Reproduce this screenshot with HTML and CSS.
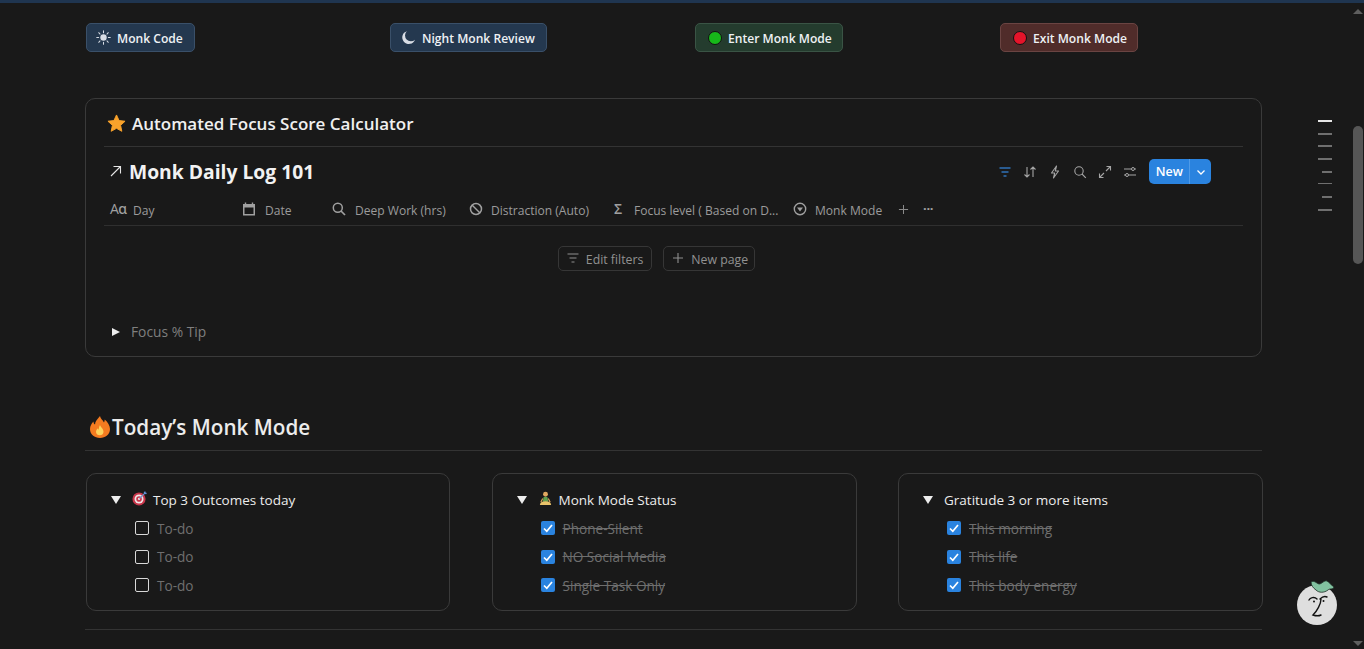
FILE: index.html
```html
<!DOCTYPE html>
<html lang="en">
<head>
<meta charset="utf-8">
<title>Monk Mode</title>
<link rel="stylesheet" href="styles.css">
</head>
<body>
<div class="topbar"></div>
<main class="page">
  <nav class="buttons">
    <div class="cell"><a class="btn btn-blue">
      <svg class="btn-ico" viewBox="0 0 16 16"><circle cx="8" cy="8" r="3.4" fill="#d8dde5"/><g stroke="#d8dde5" stroke-width="1.1" stroke-linecap="round"><path d="M8 .8v2M8 13.2v2M.8 8h2M13.2 8h2M2.9 2.9l1.4 1.4M11.7 11.7l1.4 1.4M2.9 13.1l1.4-1.4M11.7 4.3l1.4-1.4"/></g></svg>
      <span>Monk Code</span></a></div>
    <div class="cell"><a class="btn btn-blue btn-moon">
      <svg class="btn-ico" viewBox="0 0 16 16"><path d="M6.3 1.2a7 7 0 1 0 8.6 9.2 6 6 0 0 1-8.6-9.2z" fill="#d8dde5"/></svg>
      <span>Night Monk Review</span></a></div>
    <div class="cell"><a class="btn btn-green"><i class="dot dot-green"></i><span>Enter Monk Mode</span></a></div>
    <div class="cell"><a class="btn btn-red"><i class="dot dot-red"></i><span>Exit Monk Mode</span></a></div>
  </nav>

  <section class="card">
    <h3 class="card-title">
      <svg class="star" viewBox="0 0 20 20"><path d="M10 1l2.7 5.9 6.3.7-4.7 4.3 1.3 6.3L10 15.1 4.4 18.2l1.3-6.3L1 7.6l6.3-.7z" fill="#f9a22b" stroke="#f9a22b" stroke-linejoin="round"/></svg>
      <span>Automated Focus Score Calculator</span>
    </h3>
    <div class="db-head">
      <div class="db-title">
        <svg class="arrow" viewBox="0 0 12 12"><path d="M1 11L10.5 1.5M3.5 1.5h7v7" fill="none" stroke="#e6e6e6" stroke-width="1.1"/></svg>
        <span>Monk Daily Log 101</span>
      </div>
      <div class="tools">
        <svg class="tool" viewBox="0 0 14 14"><path d="M1.5 3h11M3.5 7h7M5.5 11h3" stroke="#2f72b8" stroke-width="1.7" fill="none"/></svg>
        <svg class="tool" viewBox="0 0 14 14"><path d="M4 2v10M1.5 9.5L4 12l2.5-2.5M10 12V2M7.5 4.5L10 2l2.5 2.5" stroke="#a5a5a5" stroke-width="1.1" fill="none"/></svg>
        <svg class="tool" viewBox="0 0 14 14"><path d="M8.5 1L3.5 8h3.2L5.5 13l5-7H7.3z" stroke="#a5a5a5" stroke-width="1.1" fill="none" stroke-linejoin="round"/></svg>
        <svg class="tool" viewBox="0 0 14 14"><circle cx="6" cy="6" r="4.2" stroke="#a5a5a5" stroke-width="1.1" fill="none"/><path d="M9 9l3.8 3.8" stroke="#a5a5a5" stroke-width="1.1"/></svg>
        <svg class="tool" viewBox="0 0 14 14"><path d="M8 6l4.5-4.5M8.5 1.5h4v4M6 8l-4.5 4.5M1.5 8.5v4h4" stroke="#a5a5a5" stroke-width="1.1" fill="none"/></svg>
        <svg class="tool" viewBox="0 0 14 14"><path d="M1 4h7.5M11.5 4H13M1 10h1.500M5.500 10H13" stroke="#a5a5a5" stroke-width="1.1"/><circle cx="10" cy="4" r="1.5" stroke="#a5a5a5" fill="none"/><circle cx="4" cy="10" r="1.5" stroke="#a5a5a5" fill="none"/></svg>
        <div class="new-btn"><span class="new-label">New</span><span class="new-caret"><svg viewBox="0 0 10 10"><path d="M1.500 3.500L5 7l3.500-3.500" stroke="#fff" stroke-width="1.300" fill="none"/></svg></span></div>
      </div>
    </div>
    <div class="props">
      <div class="prop p-day"><span class="aa">Aɑ</span><span>Day</span></div>
      <div class="prop p-date"><svg class="pi" viewBox="0 0 14 14"><path d="M3.500 0.500v2M10.500 0.500v2" stroke="#a0a0a0" stroke-width="1.400"/><path fill-rule="evenodd" d="M1 2h12v11.500H1zM2.500 5.500v6.500h9V5.500z" fill="#a0a0a0"/></svg><span>Date</span></div>
      <div class="prop p-deep"><svg class="pi" viewBox="0 0 14 14"><circle cx="5.800" cy="5.800" r="4.500" stroke="#a0a0a0" stroke-width="1.500" fill="none"/><path d="M9 9l4 4" stroke="#a0a0a0" stroke-width="1.700"/></svg><span>Deep Work (hrs)</span></div>
      <div class="prop p-dist"><svg class="pi" viewBox="0 0 14 14"><circle cx="7" cy="7" r="5.500" stroke="#a0a0a0" stroke-width="1.500" fill="none"/><path d="M3 3l8 8" stroke="#a0a0a0" stroke-width="1.500"/></svg><span>Distraction (Auto)</span></div>
      <div class="prop p-focus"><span class="sigma">Σ</span><span>Focus level ( Based on D...</span></div>
      <div class="prop p-mode"><svg class="pi" viewBox="0 0 14 14"><circle cx="7" cy="7" r="5.700" stroke="#a0a0a0" stroke-width="1.400" fill="none"/><path d="M4 5.500h6L7 9.500z" fill="#a0a0a0"/></svg><span>Monk Mode</span></div>
      <svg class="plus" viewBox="0 0 12 12"><path d="M6 1v10M1 6h10" stroke="#8a8a8a" stroke-width="1.100"/></svg>
      <span class="dots">···</span>
    </div>
    <div class="empty">
      <a class="ghost"><svg class="gi" viewBox="0 0 14 14"><path d="M1.500 3h11M3.500 7h7M5.500 11h3" stroke="#8f8f8f" stroke-width="1.200" fill="none"/></svg><span>Edit filters</span></a>
      <a class="ghost ghost-new"><svg class="gi" viewBox="0 0 14 14"><path d="M7 2v10M2 7h10" stroke="#8f8f8f" stroke-width="1.100"/></svg><span>New page</span></a>
    </div>
    <div class="tip"><i class="tri-right"></i><span>Focus % Tip</span></div>
  </section>

  <h2 class="section-title">
    <svg class="flame" viewBox="1 0 22 24"><path d="M12 1c1 3.500 3 4 4 6.500.5-1 .8-1.800.7-3 3 2.500 5.300 6 5.300 9.500 0 5.500-4.500 9-10 9S2 19.500 2 14c0-3 1.500-5.500 3.500-7.500 0 1.500.5 2.500 1.500 3C7 6.500 9.500 4 12 1z" fill="#f47b20"/><path d="M12 10c.5 2 3.500 3.500 3.500 7a3.800 3.800 0 0 1-7.500 0c0-1.800 1-2.800 2-3.700.300.8.600 1.200 1 1.400-.2-1.500 0-3.200 1-4.700z" fill="#fdd35c"/></svg>
    <span>Today’s Monk Mode</span>
  </h2>

  <div class="columns">
    <section class="col">
      <div class="col-head"><i class="tri-down"></i>
        <svg class="emoji" viewBox="0 0 16 16"><circle cx="7.500" cy="8.500" r="7" fill="#c8354a"/><circle cx="7.500" cy="8.500" r="4.800" fill="#efe6e6"/><circle cx="7.500" cy="8.500" r="3" fill="#c8354a"/><circle cx="7.500" cy="8.500" r="1.200" fill="#efe6e6"/><path d="M8 8L14 2" stroke="#6f92c9" stroke-width="1.200"/><path d="M12.500 1l.5 2 2 .5 1-1.500-1.500-.3-.3-1.500z" fill="#5f8fd6"/></svg>
        <span>Top 3 Outcomes today</span></div>
      <ul class="todos">
        <li class="todo"><i class="box"></i><span>To-do</span></li>
        <li class="todo"><i class="box"></i><span>To-do</span></li>
        <li class="todo"><i class="box"></i><span>To-do</span></li>
      </ul>
    </section>
    <section class="col">
      <div class="col-head"><i class="tri-down"></i>
        <svg class="emoji" viewBox="0 0 16 16"><circle cx="8" cy="3.500" r="2.600" fill="#e0a860"/><path d="M6 6.500h4l1 5H5z" fill="#5fa04e"/><path d="M2 15c0-2.500 2-4 6-4s6 1.500 6 4z" fill="#e9c36a"/><path d="M5 8l-2 4M11 8l2 4" stroke="#e0a860" stroke-width="1.200"/></svg>
        <span>Monk Mode Status</span></div>
      <ul class="todos">
        <li class="todo done"><i class="box checked"><svg viewBox="0 0 14 14"><path d="M3 7.500l2.800 2.800L11 4" stroke="#fff" stroke-width="1.700" fill="none"/></svg></i><span>Phone-Silent</span></li>
        <li class="todo done"><i class="box checked"><svg viewBox="0 0 14 14"><path d="M3 7.500l2.800 2.800L11 4" stroke="#fff" stroke-width="1.700" fill="none"/></svg></i><span>NO Social Media</span></li>
        <li class="todo done"><i class="box checked"><svg viewBox="0 0 14 14"><path d="M3 7.500l2.800 2.800L11 4" stroke="#fff" stroke-width="1.700" fill="none"/></svg></i><span>Single Task Only</span></li>
      </ul>
    </section>
    <section class="col">
      <div class="col-head"><i class="tri-down"></i><span>Gratitude 3 or more items</span></div>
      <ul class="todos">
        <li class="todo done"><i class="box checked"><svg viewBox="0 0 14 14"><path d="M3 7.500l2.800 2.800L11 4" stroke="#fff" stroke-width="1.700" fill="none"/></svg></i><span>This morning</span></li>
        <li class="todo done"><i class="box checked"><svg viewBox="0 0 14 14"><path d="M3 7.500l2.800 2.800L11 4" stroke="#fff" stroke-width="1.700" fill="none"/></svg></i><span>This life</span></li>
        <li class="todo done"><i class="box checked"><svg viewBox="0 0 14 14"><path d="M3 7.500l2.800 2.800L11 4" stroke="#fff" stroke-width="1.700" fill="none"/></svg></i><span>This body energy</span></li>
      </ul>
    </section>
  </div>
  <hr class="rule">
</main>

<div class="toc">
  <i class="w14 on"></i><i class="w14"></i><i class="w14"></i><i class="w14"></i><i class="w10"></i><i class="w14 thin"></i><i class="w10"></i><i class="w14"></i>
</div>

<div class="scrollbar">
  <i class="sb-up"></i>
  <div class="sb-track"><div class="sb-thumb"></div></div>
  <i class="sb-down"></i>
</div>

<svg class="mascot" viewBox="0 0 44 48">
  <circle cx="21" cy="27" r="20" fill="#dedede"/>
  <path d="M15 4c3-2 5 1 8 2 3 0 5-4 8-3 2 1 3 3 7 6-1 3-4 1-6 3-4 3-9 3-12 0-3-2-5-5-5-8z" fill="#82c2a0" stroke="#1a2a22" stroke-width=".8"/>
  <path d="M13 22c1-2 5-4 8-1M24 21c2-2 5-3 7-2M25 21c0 5-4 12-8 16 3 1 6 1 8 0" fill="none" stroke="#111" stroke-width="1.400" stroke-linecap="round"/>
  <circle cx="18" cy="23.500" r="1" fill="#111"/><circle cx="27.500" cy="23" r="1" fill="#111"/>
</svg>
</body>
</html>
```
FILE: styles.css
```css
* { box-sizing: border-box; }
html, body { margin: 0; height: 649px; overflow: hidden; }
body {
  background: #191919;
  color: #e6e6e6;
  font-family: "Open Sans", "Noto Sans", sans-serif;
  font-size: 13px;
}
a { text-decoration: none; color: inherit; }
i { display: block; }

.topbar { height: 3px; background: #1f3550; }
.page { padding: 0 102px 0 85px; }

.buttons {
  display: grid;
  grid-template-columns: 304px 305px 305px 1fr;
  margin-top: 20px;
  padding-left: 1px;
}
.cell { display: flex; }
.btn {
  display: flex;
  align-items: center;
  height: 29px;
  padding: 0 11px 0 9px;
  gap: 6px;
  border-radius: 5px;
  border: 1px solid;
  font-size: 12.1px;
  font-weight: 600;
  color: #eef1f4;
  white-space: nowrap;
}
.btn span { padding-top: 2px; }
.btn-blue { background: #24384f; border-color: #3a5069; }
.btn-moon { padding-left: 10px; }
.btn-green { background: #243c2e; border-color: #3a5445; padding: 0 10px 0 12px; }
.btn-red { background: #502c2a; border-color: #6a4442; padding: 0 10px 0 12px; }
.btn-ico { width: 15px; height: 15px; flex: none; }
.dot { width: 14px; height: 14px; border-radius: 50%; border: 1px solid #111; }
.dot-green { background: #17b81a; }
.dot-red { background: #e5142a; }

.card {
  margin-top: 46px;
  height: 259px;
  border: 1px solid #3a3a3a;
  border-radius: 10px;
  padding: 0 18px;
  display: flex;
  flex-direction: column;
}
.card-title {
  margin: 0;
  height: 48px;
  padding: 2px 3px 0;
  display: flex;
  align-items: center;
  gap: 6px;
  border-bottom: 1px solid #333;
  font-size: 17px;
  font-weight: 600;
  color: #f0f0f0;
}
.star { width: 19px; height: 19px; flex: none; margin-bottom: 1px; }

.db-head {
  height: 50px;
  display: flex;
  align-items: center;
  justify-content: space-between;
  padding: 0 32px 2px 6px;
}
.db-title {
  display: flex;
  align-items: center;
  gap: 7px;
  font-size: 19.3px;
  font-weight: 700;
  color: #f2f2f2;
}
.arrow { width: 12px; height: 12px; flex: none; }
.tools { display: flex; align-items: center; gap: 11px; }
.tool { width: 14px; height: 14px; flex: none; margin-top: 2px; }
.new-btn {
  display: flex;
  align-items: stretch;
  height: 25px;
  margin-left: 1px;
  background: #2a83df;
  border-radius: 5px;
  color: #fff;
  font-weight: 600;
  font-size: 12.5px;
}
.new-label { display: flex; align-items: center; padding: 0 6px 0 7px; border-right: 1px solid #4f9be8; }
.new-caret { display: flex; align-items: center; justify-content: center; width: 21px; }
.new-caret svg { width: 10px; height: 10px; margin-top: 2px; }

.props {
  height: 29px;
  padding-bottom: 2px;
  display: flex;
  align-items: center;
  border-bottom: 1px solid #2f2f2f;
  color: #9b9b9b;
  font-size: 12.05px;
  position: relative;
}
.prop { display: flex; align-items: center; flex: none; white-space: nowrap; gap: 8px; }
.p-day { width: 138px; padding-left: 6px; gap: 7px; }
.p-date { width: 90px; gap: 9px; }
.p-deep { width: 137px; gap: 9px; }
.p-dist { width: 145px; }
.p-focus { width: 179px; gap: 9px; }
.p-mode { width: 105px; }
.pi { width: 14px; height: 14px; flex: none; margin-top: -3px; }
.aa { font-size: 14px; font-weight: 500; width: 16px; letter-spacing: -.5px; margin-top: -3px; color: #a0a0a0; white-space: nowrap; }
.sigma { font-size: 14px; margin-top: -3px; font-weight: 600; width: 11px; color: #a0a0a0; }
.plus { width: 11px; height: 11px; flex: none; margin-top: -2px; }
.dots { margin-left: 14px; font-weight: 700; font-size: 13px; letter-spacing: -.3px; line-height: 1; margin-top: -3px; color: #a0a0a0; }

.empty {
  display: flex;
  justify-content: center;
  gap: 11px;
  margin-top: 20px;
  padding-right: 34px;
}
.ghost {
  display: flex;
  align-items: center;
  gap: 6px;
  height: 25px;
  padding: 0 8px 0 7px;
  border: 1px solid #363636;
  border-radius: 5px;
  font-size: 12.3px;
  color: #919191;
  font-weight: 500;
}
.ghost span { padding-top: 2px; }
.ghost-new { padding-right: 6px; }
.gi { width: 14px; height: 14px; flex: none; margin-top: -2px; }

.tip {
  display: flex;
  align-items: center;
  gap: 11px;
  margin-top: 51px;
  padding-left: 8px;
  font-size: 13.8px;
  color: #7f7f7f;
}
.tri-right { width: 0; height: 0; border-left: 8px solid #ededed; border-top: 4.5px solid transparent; border-bottom: 4.5px solid transparent; }
.tri-down { width: 0; height: 0; border-top: 8px solid #ededed; border-left: 5px solid transparent; border-right: 5px solid transparent; flex: none; }

.section-title {
  margin: 53px 0 0;
  height: 41px;
  padding: 0 0 6px 3px;
  display: flex;
  align-items: center;
  border-bottom: 1px solid #333;
  font-size: 20.7px;
  font-weight: 600;
  color: #ececec;
}
.flame { width: 24px; height: 24px; flex: none; }

.columns {
  display: grid;
  grid-template-columns: 364px 365px 365px;
  column-gap: 41.5px;
  margin-top: 22px;
  padding-left: 1px;
}
.col {
  height: 138px;
  border: 1px solid #3a3a3a;
  border-radius: 10px;
  padding: 16px 0 0 24px;
}
.col-head {
  display: flex;
  align-items: center;
  height: 19px;
  font-size: 13.5px;
  color: #ececec;
}
.col-head .tri-down { margin-right: 11px; }
.emoji { width: 15px; height: 15px; flex: none; margin-right: 6px; margin-top: -2px; }
.todos { list-style: none; margin: 5px 0 0; padding: 0 0 0 24px; }
.todo {
  display: flex;
  align-items: center;
  height: 28.5px;
  gap: 8px;
  font-size: 13.6px;
  color: #6f6f6f;
}
.box { width: 14px; height: 14px; border: 1px solid #d8d8d8; border-radius: 2px; flex: none; }
.box.checked { background: #2a83df; border: 0; border-radius: 2px; }
.box.checked svg { width: 14px; height: 14px; display: block; }
.done span { text-decoration: line-through; color: #6e6e6e; }

.rule { margin: 18px 0 0; border: 0; border-top: 1px solid #333; }

.toc {
  position: absolute;
  top: 120px;
  left: 1318px;
  width: 14px;
  display: flex;
  flex-direction: column;
  align-items: flex-end;
  gap: 10.67px;
}
.toc i { height: 2px; background: #6f6f6f; }
.toc .on { background: #e6e6e6; }
.toc .thin { height: 1px; margin-bottom: 1px; }
.w14 { width: 14px; }
.w10 { width: 10px; }

.scrollbar {
  position: absolute;
  top: 3px;
  right: 0;
  width: 13px;
  height: 646px;
  display: flex;
  flex-direction: column;
  align-items: center;
}
.sb-up, .sb-down { width: 0; height: 0; border-left: 5px solid transparent; border-right: 5px solid transparent; }
.sb-up { border-bottom: 5px solid #5e5e5e; margin-top: 6px; }
.sb-down { border-top: 5px solid #5e5e5e; margin-bottom: 3px; }
.sb-track { flex: 1; width: 100%; padding-top: 112px; display: flex; justify-content: center; }
.sb-thumb { width: 10px; height: 138px; background: #565656; border-radius: 5px; }

.mascot { position: absolute; left: 1296px; top: 578px; width: 44px; height: 48px; }
```
